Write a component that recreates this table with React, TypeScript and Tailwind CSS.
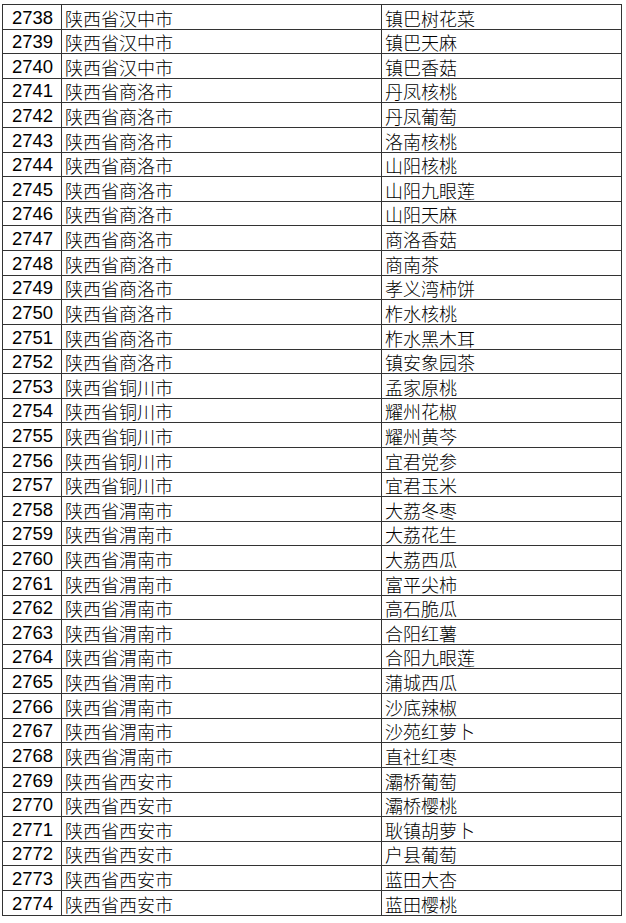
import React from "react";

const rows: [number, string, string][] = [
  [2738, "陕西省汉中市", "镇巴树花菜"],
  [2739, "陕西省汉中市", "镇巴天麻"],
  [2740, "陕西省汉中市", "镇巴香菇"],
  [2741, "陕西省商洛市", "丹凤核桃"],
  [2742, "陕西省商洛市", "丹凤葡萄"],
  [2743, "陕西省商洛市", "洛南核桃"],
  [2744, "陕西省商洛市", "山阳核桃"],
  [2745, "陕西省商洛市", "山阳九眼莲"],
  [2746, "陕西省商洛市", "山阳天麻"],
  [2747, "陕西省商洛市", "商洛香菇"],
  [2748, "陕西省商洛市", "商南茶"],
  [2749, "陕西省商洛市", "孝义湾柿饼"],
  [2750, "陕西省商洛市", "柞水核桃"],
  [2751, "陕西省商洛市", "柞水黑木耳"],
  [2752, "陕西省商洛市", "镇安象园茶"],
  [2753, "陕西省铜川市", "孟家原桃"],
  [2754, "陕西省铜川市", "耀州花椒"],
  [2755, "陕西省铜川市", "耀州黄芩"],
  [2756, "陕西省铜川市", "宜君党参"],
  [2757, "陕西省铜川市", "宜君玉米"],
  [2758, "陕西省渭南市", "大荔冬枣"],
  [2759, "陕西省渭南市", "大荔花生"],
  [2760, "陕西省渭南市", "大荔西瓜"],
  [2761, "陕西省渭南市", "富平尖柿"],
  [2762, "陕西省渭南市", "高石脆瓜"],
  [2763, "陕西省渭南市", "合阳红薯"],
  [2764, "陕西省渭南市", "合阳九眼莲"],
  [2765, "陕西省渭南市", "蒲城西瓜"],
  [2766, "陕西省渭南市", "沙底辣椒"],
  [2767, "陕西省渭南市", "沙苑红萝卜"],
  [2768, "陕西省渭南市", "直社红枣"],
  [2769, "陕西省西安市", "灞桥葡萄"],
  [2770, "陕西省西安市", "灞桥樱桃"],
  [2771, "陕西省西安市", "耿镇胡萝卜"],
  [2772, "陕西省西安市", "户县葡萄"],
  [2773, "陕西省西安市", "蓝田大杏"],
  [2774, "陕西省西安市", "蓝田樱桃"],
];

export default function App() {
  return (
    <div className="w-[626px] h-[923px] bg-white pt-[4px] pl-[2px]">
      <table className="border-collapse table-fixed w-[619px] border border-[#333]">
        <colgroup>
          <col className="w-[59px]" />
          <col className="w-[320px]" />
          <col className="w-[240px]" />
        </colgroup>
        <tbody>
          {rows.map(([n, p, c]) => (
            <tr key={n} className="h-[24.62px]">
              <td className="border border-[#333] p-0 pl-[9px] align-bottom text-[18.5px] leading-[22px] text-black font-['Liberation_Sans',sans-serif]">
                {n}
              </td>
              <td className="border border-[#333] p-0 pl-[3px] align-bottom text-[18px] leading-[22px] text-black font-['Noto_Sans_CJK_SC',sans-serif] font-light">
                {p}
              </td>
              <td className="border border-[#333] p-0 pl-[3px] align-bottom text-[18px] leading-[22px] text-black font-['Noto_Sans_CJK_SC',sans-serif] font-light">
                {c}
              </td>
            </tr>
          ))}
        </tbody>
      </table>
    </div>
  );
}
